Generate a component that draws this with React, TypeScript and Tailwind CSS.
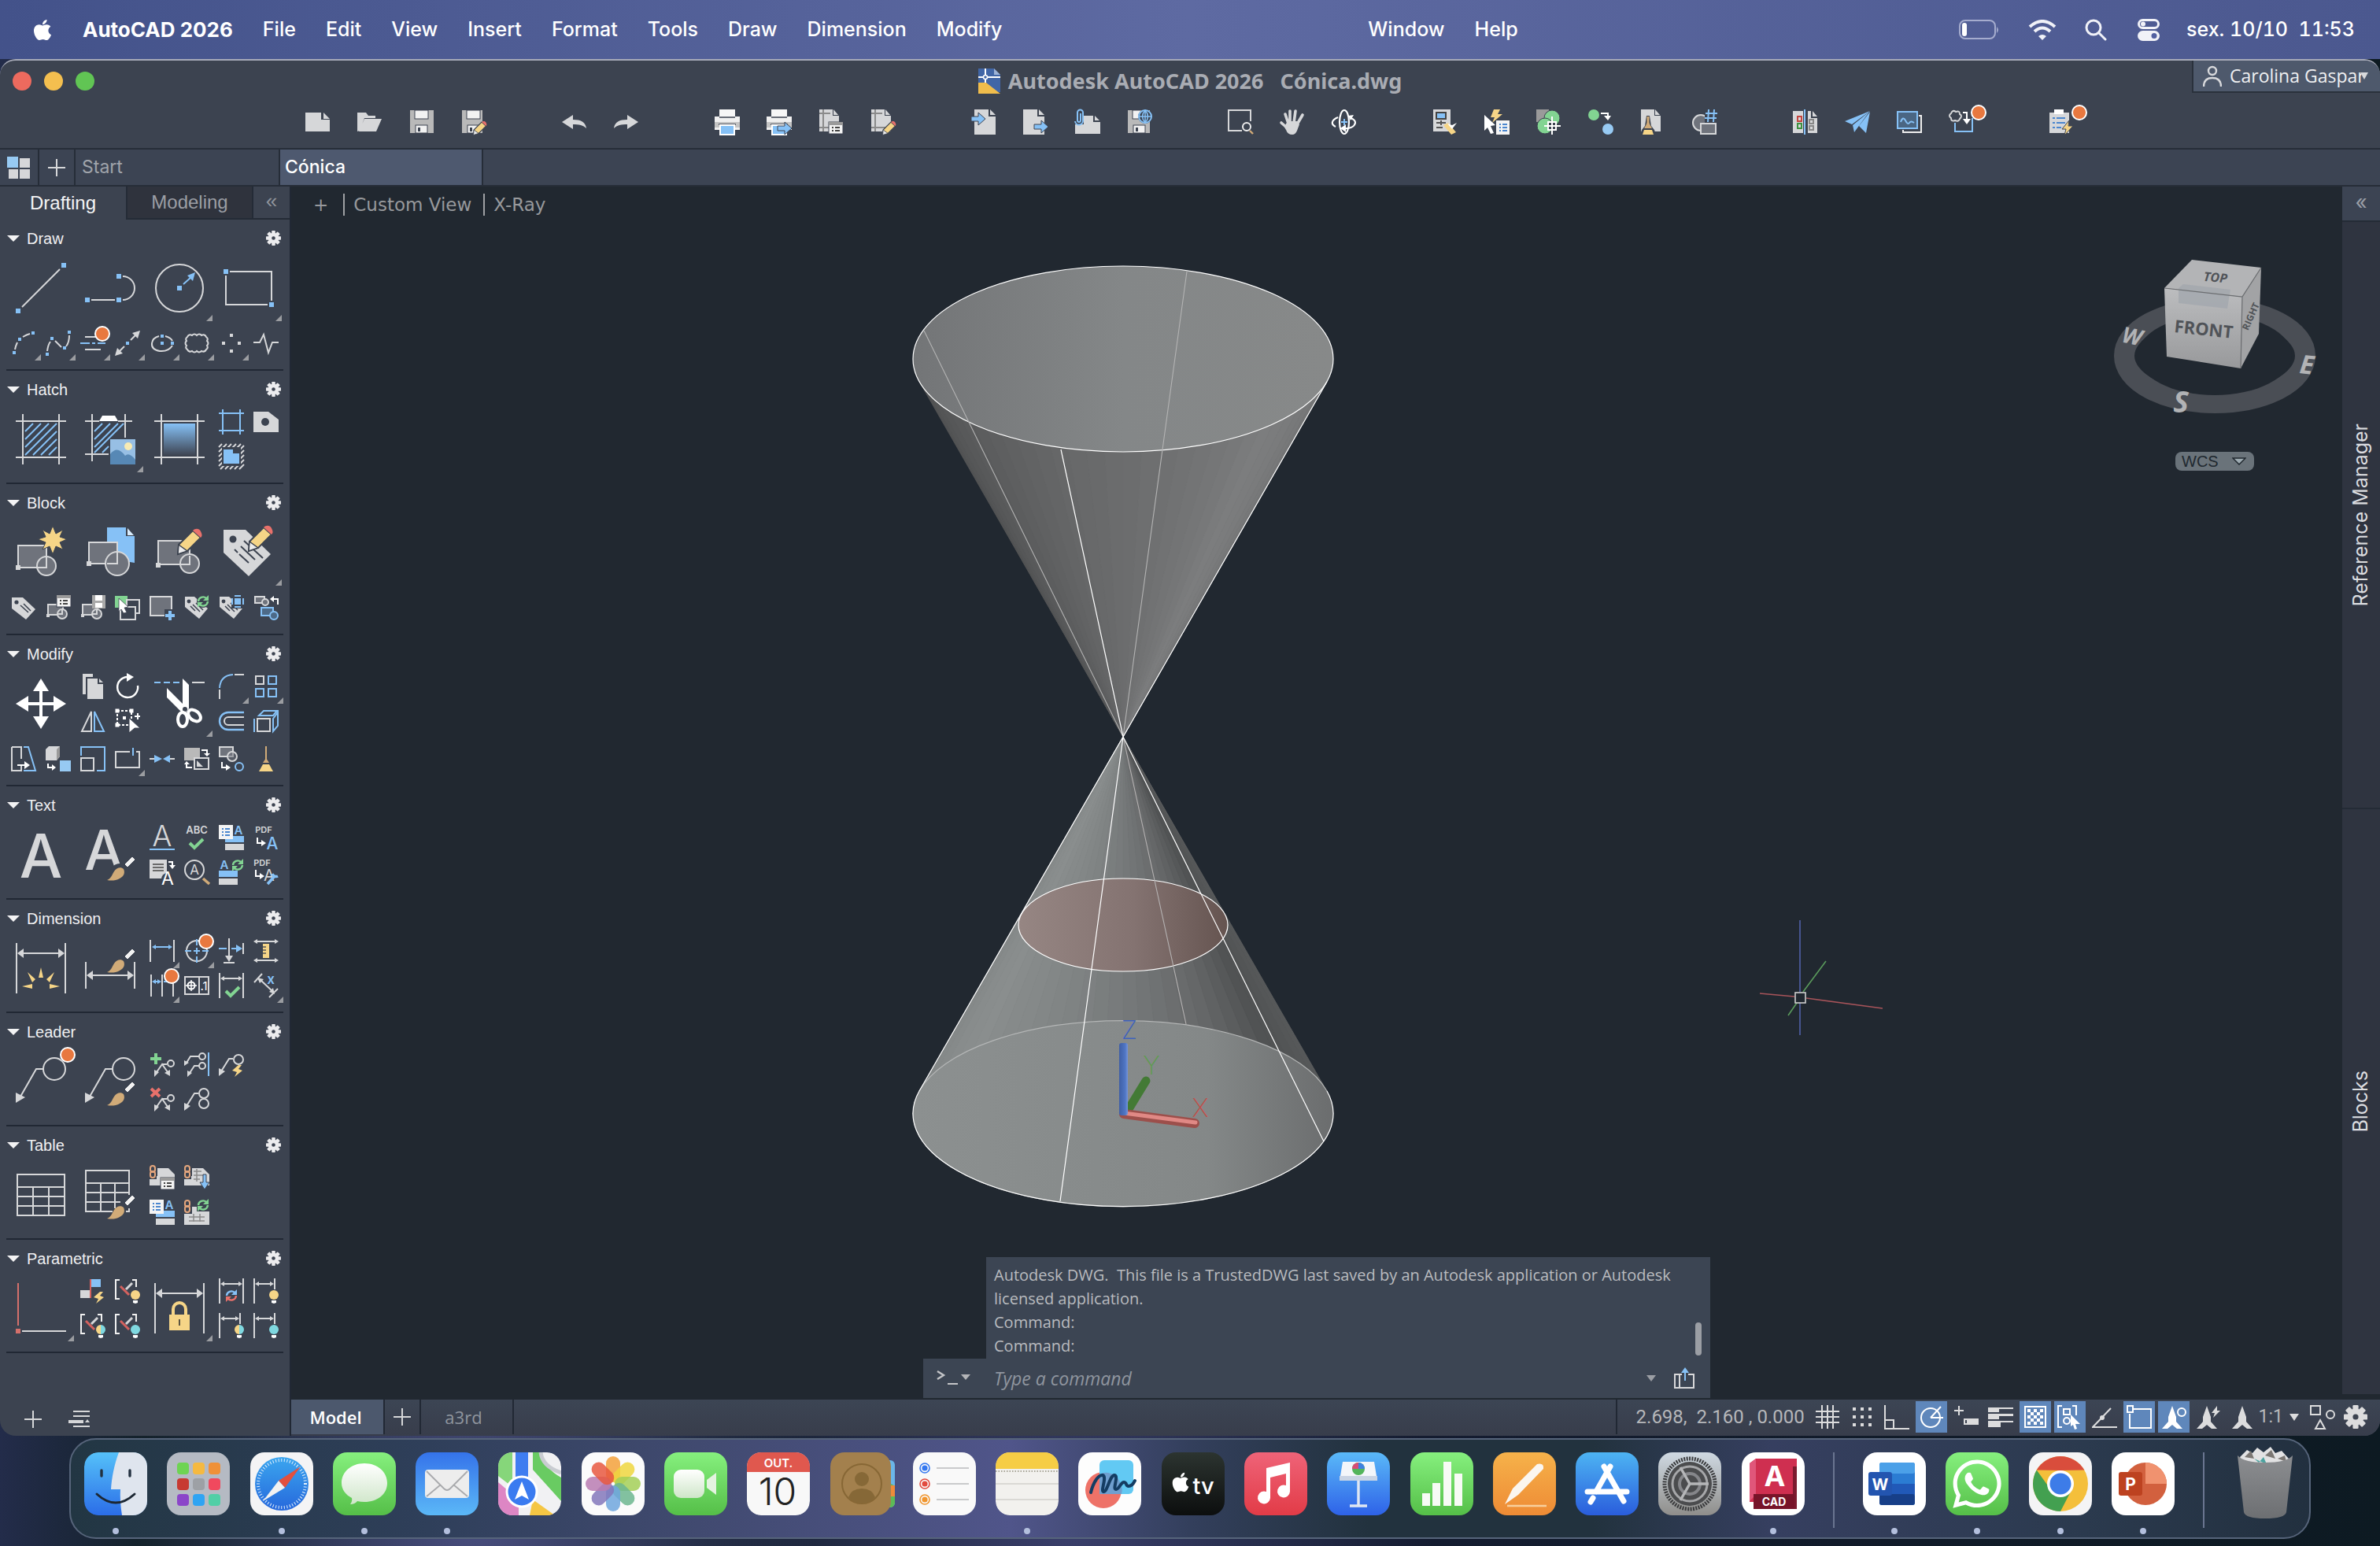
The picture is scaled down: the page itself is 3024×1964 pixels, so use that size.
import React from 'react';
import { FaApple, FaWhatsapp } from 'react-icons/fa';

// icon palette
const G = '#d6d7d9';
const B = '#86c1f6';
const Y = '#f6d587';
const GR = '#82d492';
const R = '#e8716b';
const BG = '#3c4350';
const TAN = '#d1ab78';

type Tool = { name: string; art: React.ReactNode; big?: boolean; fly?: boolean; badge?: boolean };
type Section = { title: string; tools: (Tool | null)[]; extra?: (Tool | null)[] };

const Sq = ({ x, y, s = 6, f = B }: { x: number; y: number; s?: number; f?: string }) => (
  <rect x={x - s / 2} y={y - s / 2} width={s} height={s} fill={f} />
);

const L = ({ d, c = G, w = 2, f = 'none', dash }: { d: string; c?: string; w?: number; f?: string; dash?: string }) => (
  <path d={d} stroke={c} strokeWidth={w} fill={f} strokeDasharray={dash} />
);

const P = ({ d, c = G, o }: { d: string; c?: string; o?: string }) => (
  <path d={d} fill={c} stroke={o} strokeWidth={o ? 2 : undefined} />
);

const T = ({ x, y, s, c = G, w = 400, children }: { x: number; y: number; s: number; c?: string; w?: number; children: string }) => (
  <text x={x} y={y} fontSize={s} fill={c} fontWeight={w} textAnchor="middle" fontFamily='Inter, "Liberation Sans", sans-serif'>
    {children}
  </text>
);

const Gear = ({ size = 19, color = '#ececee', hole = BG }: { size?: number; color?: string; hole?: string }) => (
  <svg width={size} height={size} viewBox="-10 -10 20 20" aria-hidden="true">
    {[0, 45, 90, 135].map((a) => (
      <rect key={a} x="-2.4" y="-10" width="4.8" height="20" rx="0.8" fill={color} transform={`rotate(${a})`} />
    ))}
    <circle r="7" fill={color} />
    <circle r="2.4" fill={hole} />
  </svg>
);

const Brush = ({ x = 0, y = 0 }: { x?: number; y?: number }) => (
  <g transform={`translate(${x} ${y})`}>
    <path d="M22 10L32 0l4 4L26 14z" fill="#f2f2f2" stroke={BG} strokeWidth="1" />
    <path d="M0 30c5-2 6-6 9-11 3-5 9-6 12-3 2 4 1 9-5 12-5 3-11 3-16 2z" fill={TAN} />
  </g>
);

const Check = ({ x, y }: { x: number; y: number }) => <L d={`M${x} ${y}l6 6 11-11`} c={GR} w={4} />;

const Bulb = ({ x, y, left = Y, right = Y }: { x: number; y: number; left?: string; right?: string }) => (
  <g>
    <path d={`M${x} ${y - 6}a6 6 0 0 0 0 12z`} fill={left} />
    <path d={`M${x} ${y - 6}a6 6 0 0 1 0 12z`} fill={right} />
    <path d={`M${x - 3} ${y + 7}h6v3l-3 1-3-1z`} fill="#fff" />
  </g>
);

const Sync = ({ x, y, a = GR, b = GR }: { x: number; y: number; a?: string; b?: string }) => (
  <g>
    <L d={`M${x - 6} ${y}a6 6 0 0 1 10-4`} c={a} w={2.4} />
    <L d={`M${x + 6} ${y}a6 6 0 0 1-10 4`} c={b} w={2.4} />
    <P d={`M${x + 7} ${y - 8}v7h-7z`} c={a} />
    <P d={`M${x - 7} ${y + 8}v-7h7z`} c={b} />
  </g>
);

const Bolt = ({ x, y }: { x: number; y: number }) => <P d={`M${x + 8} ${y}L${x} ${y + 7}l6 2-3 6 10-8-5-2 4-5z`} c={Y} />;

const DimH = ({ x1, x2, y, c = G, s = 4 }: { x1: number; x2: number; y: number; c?: string; s?: number }) => (
  <g>
    <L d={`M${x1 + s} ${y}H${x2 - s}`} c={c} />
    <P d={`M${x1} ${y}l${s + 2} ${-s}v${s * 2}z`} c={c} />
    <P d={`M${x2} ${y}l${-s - 2} ${-s}v${s * 2}z`} c={c} />
  </g>
);

const MiniBlock = () => (
  <g>
    <rect x="3" y="12" width="19" height="13" fill="#6f737c" stroke={G} strokeWidth="2" />
    <circle cx="21" cy="24" r="6" fill="#6f737c" stroke={G} strokeWidth="2" />
    <L d="M16 24h5v-6" w={2} />
    <Sq x={3} y={26} s={4} f={G} />
  </g>
);

const MiniTag = () => (
  <g>
    <P d="M1 2h12l17 15-11 13L1 15z" />
    <circle cx="6" cy="8" r="2.4" fill={BG} />
    <L d="M11 12l9 9M15 10l9 9M8 14l6 6" c={BG} w={1.5} />
  </g>
);

const ListCard = ({ x, y, w = 18, h = 18 }: { x: number; y: number; w?: number; h?: number }) => (
  <g>
    <rect x={x} y={y} width={w} height={h} fill="#f4f4f4" />
    {[5, 9, 13].map((d) => (
      <L key={d} d={`M${x + 4} ${y + d}h2M${x + 8} ${y + d}h6`} c="#4b87cf" w={2} />
    ))}
  </g>
);

const Form = ({ x, y }: { x: number; y: number }) => (
  <g>
    <rect x={x} y={y} width="18" height="15" fill="#f4f4f4" stroke={BG} strokeWidth="1" />
    <rect x={x} y={y} width="18" height="4" fill="#9a9a9a" />
    <L d={`M${x + 4} ${y + 7}h2M${x + 8} ${y + 7}h6M${x + 4} ${y + 11}h2M${x + 8} ${y + 11}h6`} c="#444" w={2} />
  </g>
);

const Chain = () => (
  <g fill="none">
    <rect x="0" y="0" width="9" height="18" fill={BG} />
    <rect x="1" y="1" width="6" height="8" rx="3" stroke="#e4a67d" strokeWidth="2" />
    <rect x="1" y="8" width="6" height="8" rx="3" stroke="#e4a67d" strokeWidth="2" />
  </g>
);

const Constraint = () => (
  <g>
    <L d="M6 2H1v24h5M22 2h5v9" c="#f0f0f0" />
    <L d="M7 10l11 11" c="#d4615e" w={3} />
    <L d="M14 14l8-8" w={3} />
  </g>
);

const Pencil = ({ x, y, k = 1 }: { x: number; y: number; k?: number }) => (
  <g transform={`translate(${x} ${y}) scale(${k})`}>
    <path d="M2 20L20 2l10 9-17 17-12 4z" fill={Y} stroke={BG} strokeWidth="2" />
    <path d="M20 2c3-3 8-3 10 1s2 6 0 8z" fill={R} />
    <path d="M2 20l11 8-12 4z" fill="#ececec" stroke={BG} strokeWidth="1.5" />
  </g>
);

const leaderArt = (
  <g>
    <circle cx="49" cy="16" r="14" fill="none" stroke={G} strokeWidth="2" />
    <L d="M35 16h-9L6 51" />
    <P d="M0 46l12 6-12 7z" />
  </g>
);

const miniLeader = (
  <g>
    <L d="M9 26l7-10 7 10M16 16h6" />
    <circle cx="27" cy="15" r="4" fill="none" stroke={G} strokeWidth="2" />
    <P d="M6 23l6 3-6 6zM26 23v8l-7-4z" />
  </g>
);

const textList = (
  <g>
    <rect x="8" y="14" width="24" height="8" fill={B} />
    <rect x="8" y="24" width="24" height="8" fill={G} />
    <ListCard x={0} y={0} />
    <T x={25} y={12} s={15} c={B} w={600}>A</T>
  </g>
);

const sections: Section[] = [
  {
    title: 'Draw',
    tools: [
      { name: 'Line', big: true, art: <g><L d="M8 56L56 8" /><Sq x={3} y={61} /><Sq x={61} y={3} /></g> },
      { name: 'Polyline', big: true, art: <g><L d="M8 47h30M48 17a15 15 0 0 1 0 30" /><Sq x={3} y={47} /><Sq x={43} y={47} /><Sq x={43} y={17} /></g> },
      { name: 'Circle', big: true, fly: true, art: <g><circle cx="32" cy="32" r="30" fill="none" stroke={G} strokeWidth="2" /><Sq x={32} y={32} /><L d="M37 27l10-9" c={B} /><P d="M52 12l-3 11-7-7z" c={B} /></g> },
      { name: 'Rectangle', big: true, fly: true, art: <g><L d="M8 11h53v37M3 16v37h53" /><Sq x={3} y={11} /><Sq x={61} y={53} /></g> },
    ],
    extra: [
      { name: 'Arc', fly: true, art: <g><L d="M5 24q1-5 3-9M15 8q5-3 9-4" /><Sq x={4} y={28} s={4} /><Sq x={11} y={11} s={4} /><Sq x={28} y={3} s={4} /></g> },
      { name: 'Spline', fly: true, art: <g><L d="M2 26q1-8 4-12M12 13l8 8M26 20q4-5 4-14" /><Sq x={2} y={30} s={4} /><Sq x={8} y={10} s={4} /><Sq x={24} y={22} s={4} /><Sq x={30} y={2} s={4} /></g> },
      { name: 'Multiline', fly: true, badge: true, art: <g><L d="M6 8h18M6 24h20" /><L d="M0 16h12M15 16h4M22 16h10" c={B} /></g> },
      { name: 'Ray', fly: true, art: <g><L d="M6 26l6-6M20 12l6-6" /><Sq x={16} y={16} s={4} /><P d="M32 0l-3 10-7-7zM0 32l3-10 7 7z" /></g> },
      { name: 'Ellipse', fly: true, art: <g><L d="M20 7q7 2 9 6M29 19q-5 8-16 7Q2 24 3 16q1-7 9-9" /><Sq x={16} y={7} s={4} /><Sq x={16} y={16} s={4} /><Sq x={29} y={16} s={4} /></g> },
      { name: 'Revision cloud', fly: true, art: <g><path d="M4 8q2-4 6-2 3-3 6 0 3-3 6 0 4-2 6 2 3 2 1 5 3 3 0 6 2 3-1 5-2 4-6 2-3 3-6 0-3 3-6 0-4 2-6-2-3-2-1-5-3-3 0-6-2-3 1-5z" fill="none" stroke={G} strokeWidth="2" /></g> },
      { name: 'Point', fly: true, art: <g><Sq x={16} y={6} s={4} f={G} /><Sq x={16} y={26} s={4} f={G} /><Sq x={6} y={16} s={4} f={G} /><Sq x={26} y={16} s={4} f={G} /></g> },
      { name: 'Break line', art: <L d="M0 15h8l5-10 6 23 5-13h8" /> },
    ],
  },
  {
    title: 'Hatch',
    tools: [
      { name: 'Hatch', big: true, art: <g><L d="M9 0v64M55 0v64M0 9h64M0 55h64" /><L d="M12 22L22 12M12 32L32 12M12 42L42 12M12 52L52 12M22 52L52 22M32 52L52 32M42 52L52 42" c={B} /></g> },
      { name: 'Super hatch', big: true, fly: true, art: <g><L d="M9 0v60M0 9h18M42 9h18M51 0v30M0 51h30" /><L d="M12 22L22 12M12 32L32 12M12 42L42 12M12 49L49 12M22 49l8-8" c={B} /><P d="M18 9l4-7h16l4 7z" c="#fff" /><rect x="32" y="32" width="32" height="32" fill="#97bfe4" /><circle cx="55" cy="41" r="5" fill="#f7ebb4" /><P d="M32 51q9-12 19 2 5-5 13 5v6H32z" c="#5788b5" /></g> },
      { name: 'Gradient', big: true, art: <g><defs><linearGradient id="grad" x1="0" y1="0" x2="0" y2="1"><stop offset="0" stopColor="#86c1f6" /><stop offset="1" stopColor="#3f4654" /></linearGradient></defs><L d="M9 0v64M55 0v64M0 9h64M0 55h64" /><rect x="12" y="12" width="40" height="40" fill="url(#grad)" /></g> },
      { name: 'Boundary', art: <L d="M5 0v32M27 0v32M0 5h32M0 27h32" c={B} /> },
      { name: 'Wipeout', art: <g><P d="M0 3h19l13 10v16H0z" /><circle cx="15" cy="16" r="5" fill={BG} /></g> },
      { name: 'Hatch boundary', art: <g><L d="M0 4l4-4M0 10L10 0M0 16L16 0M0 22L22 0M0 28L28 0M2 32L32 2M8 32L32 8M14 32l18-18M20 32l12-12M26 32l6-6" /><rect x="4" y="4" width="24" height="24" fill={BG} /><P d="M6 7h12v5h8v13H6z" c={B} /></g> },
    ],
  },
  {
    title: 'Block',
    tools: [
      { name: 'Create block', big: true, art: <g><rect x="3" y="23" width="36" height="28" fill="#6f737c" stroke={G} strokeWidth="2" /><circle cx="39" cy="49" r="12" fill="#6f737c" stroke={G} strokeWidth="2" /><L d="M27 51h12V38" /><Sq x={3} y={51} f={G} /><path d="M47-2l4 10 9-5-4 9 9 3-9 4 4 9-9-4-4 10-4-10-9 4 4-9-10-4 10-3-4-9 9 5z" fill={Y} stroke={BG} strokeWidth="1" /></g> },
      { name: 'Insert block', big: true, art: <g><path d="M28 0h24v11h11v34l-35-6z" fill={B} /><path d="M54 1v9h8z" fill="#d9ecfc" /><rect x="5" y="19" width="36" height="27" fill="#6f737c" stroke={G} strokeWidth="2" /><circle cx="41" cy="46" r="15" fill="#6f737c" stroke={G} strokeWidth="2" /><L d="M28 46h13V32" /><Sq x={5} y={46} f={G} /></g> },
      { name: 'Edit block', big: true, art: <g><rect x="5" y="17" width="40" height="30" fill="#6f737c" stroke={G} strokeWidth="2" /><circle cx="45" cy="46" r="12" fill="#6f737c" stroke={G} strokeWidth="2" /><L d="M34 47h11V36" /><Sq x={5} y={48} f={G} /><Pencil x={29} y={2} /></g> },
      { name: 'Edit attribute', big: true, fly: true, art: <g><P d="M0 3h28l32 31-28 28L0 32z" /><circle cx="12" cy="15" r="4.5" fill={BG} /><L d="M26 17l24 22M22 24l18 17M20 34l12 11M14 28l4 4" c={BG} /><Pencil x={31} y={-2} /></g> },
    ],
    extra: [
      { name: 'Define attribute', art: <g><P d="M1 3h14l16 15-12 13L1 17z" /><circle cx="7" cy="9" r="2.6" fill={BG} /><L d="M12 13l10 9M16 11l9 9" c={BG} w={1.6} /></g> },
      { name: 'Block properties', art: <g><MiniBlock /><Form x={14} y={0} /></g> },
      { name: 'Write block', art: <g><MiniBlock /><rect x="15" y="0" width="17" height="17" fill="#a9a9a9" /><rect x="19" y="0" width="9" height="7" fill="#fff" /><rect x="19" y="10" width="9" height="6" fill="#fff" /></g> },
      { name: 'Select block', art: <g><rect x="0" y="1" width="16" height="15" fill={GR} /><rect x="15" y="6" width="16" height="17" fill="none" stroke={G} strokeWidth="2" /><rect x="7" y="15" width="19" height="16" fill={BG} stroke={G} strokeWidth="2" /><path d="M5 4l12 11-5 1 3 6-4 1-3-5-3 3z" fill="#fff" stroke={BG} strokeWidth="0.8" /></g> },
      { name: 'Base point', art: <g><rect x="1" y="2" width="27" height="24" fill="#6f737c" stroke={G} strokeWidth="2" /><rect x="19" y="18" width="13" height="14" fill={BG} /><L d="M26 20v12M20 26h12" c={B} w={4} /></g> },
      { name: 'Sync attributes', art: <g><MiniTag /><circle cx="24" cy="8" r="8" fill={BG} /><Sync x={24} y={8} /></g> },
      { name: 'Attribute display', art: <g><MiniTag /><rect x="16" y="0" width="16" height="17" fill={BG} /><rect x="20" y="4" width="8" height="8" fill={B} /><L d="M20 1h8M20 15h8M17 4v8M31 4v8" c={B} /></g> },
      { name: 'Replace block', art: <g><rect x="2" y="2" width="12" height="8" fill="#6f737c" stroke={G} strokeWidth="2" /><circle cx="15" cy="9" r="4" fill="#6f737c" stroke={G} strokeWidth="2" /><L d="M31 12V5h-6" c="#fff" /><P d="M26 1v8l-5-4z" c="#fff" /><rect x="10" y="16" width="15" height="10" fill="#4d6a88" stroke={B} strokeWidth="2" /><circle cx="26" cy="26" r="5" fill="#4d6a88" stroke={B} strokeWidth="2" /></g> },
    ],
  },
  {
    title: 'Modify',
    tools: [
      { name: 'Move', big: true, art: <g><L d="M32 8v48M8 32h48" c="#fff" w={4} /><P d="M32 0l10 16H22zM32 64l10-16H22zM0 32l16-10v20zM64 32L48 22v20z" c="#fff" /></g> },
      { name: 'Copy', art: <g><P d="M3 0h13v4H7v22H3z" /><P d="M9 6h13v7h7v19H9zM24 6l5 5h-5z" /></g> },
      { name: 'Rotate', art: <g><L d="M29 15a13 13 0 1 1-13-11" c="#fff" w={2.4} /><P d="M15-1l9 5-9 6z" c="#fff" /></g> },
      { name: 'Trim', big: true, fly: true, art: <g><L d="M0 5h34" c={B} dash="8 4" /><L d="M48 5h16" /><P d="M36 0l8 8v30l-6 8-22-22V12l20 20z" c="#fff" /><circle cx="39" cy="39" r="3" fill={BG} /><ellipse cx="36" cy="52" rx="6" ry="9" fill="none" stroke="#fff" strokeWidth="4" /><ellipse cx="51" cy="47" rx="6" ry="9" fill="none" stroke="#fff" strokeWidth="4" transform="rotate(-50 51 47)" /></g> },
      { name: 'Fillet', fly: true, art: <g><L d="M1 18Q2 2 18 1" c={B} /><L d="M20 1h12M1 20v12" /></g> },
      { name: 'Array', fly: true, art: <g fill="none" strokeWidth="2"><rect x="3" y="3" width="10" height="10" stroke={G} /><rect x="19" y="3" width="10" height="10" stroke={B} /><rect x="3" y="19" width="10" height="10" stroke={B} /><rect x="19" y="19" width="10" height="10" stroke={B} /></g> },
      { name: 'Mirror', art: <g><L d="M14 4v25H2z" /><L d="M18 4v25h12z" c={B} /></g> },
      { name: 'Stretch grips', art: <g><rect x="3" y="3" width="18" height="18" fill="none" stroke="#fff" strokeWidth="2" strokeDasharray="3 2" /><Sq x={3} y={3} s={5} f="#fff" /><Sq x={21} y={3} s={5} f="#fff" /><Sq x={3} y={21} s={5} f="#fff" /><Sq x={12} y={12} s={4} f="#fff" /><path d="M18 12l14 13h-7l-7 6z" fill="#fff" stroke={BG} strokeWidth="1" /><L d="M29 6v8M25 10h7" c="#fff" /></g> },
      { name: 'Offset', art: <g><L d="M32 5H12a11 11 0 0 0 0 22h20" c={B} w={2.4} /><L d="M32 11H12a5 5 0 0 0 0 10h20" /></g> },
      { name: 'Solid offset', art: <g><rect x="5" y="13" width="16" height="16" fill="none" stroke={G} strokeWidth="2" /><L d="M1 13v17M7 9l6-6h17l-5 6zM25 29V13l6-8v17z" c={B} /></g> },
    ],
    extra: [
      { name: 'Shear', art: <g><L d="M1 1h12v15M13 24v7H1V1" /><L d="M16 1h6l9 30H16" c={B} /><L d="M8 24h11" c="#fff" /><P d="M17 19l7 5-7 5z" c="#fff" /></g> },
      { name: 'Move to layer', art: <g><P d="M0 4l4-4h14v13l-4 5H0z" /><P d="M14 4l4-4v13l-4 5z" c="#9a9a9a" /><rect x="18" y="18" width="14" height="14" fill="#97caf3" /><L d="M3 22v5h6" c="#fff" /><P d="M8 23l5 4-5 4z" c="#fff" /></g> },
      { name: 'Scale', art: <g><L d="M1 12V1h30v30H21" c={B} /><rect x="1" y="15" width="16" height="16" fill="none" stroke={G} strokeWidth="2" /></g> },
      { name: 'Break', fly: true, art: <g><L d="M19 7H1v20h30V7h-4" /><L d="M23 2v10" c={B} /></g> },
      { name: 'Join', art: <g><L d="M0 16h6M26 16h6" /><P d="M6 11l10 5-10 5zM26 11l-9 5 9 5z" c={B} /></g> },
      { name: 'Draw order', art: <g><rect x="0" y="2" width="20" height="16" fill="#b9b9b9" /><rect x="13" y="15" width="18" height="14" fill={BG} stroke={G} strokeWidth="2" /><P d="M16 18v8h8z" /><L d="M22 5h7v5M10 27H3v-5" c="#fff" /><P d="M25 9h8l-4 4zM0 23h7l-4-4z" c="#fff" /></g> },
      { name: 'Copy nested', art: <g><rect x="1" y="1" width="17" height="12" fill="#6f737c" stroke={G} strokeWidth="2" /><circle cx="17" cy="13" r="6" fill="#6f737c88" stroke={G} strokeWidth="2" /><circle cx="26" cy="26" r="5" fill="none" stroke={B} strokeWidth="2" /><L d="M4 20v7h6" c="#fff" /><P d="M9 23l6 4-6 4z" c="#fff" /></g> },
      { name: 'Purge', art: <g><L d="M16 0v18" c={TAN} /><P d="M16 15l4 6h-8z" c={TAN} /><P d="M12 23h8l5 9H7z" c={Y} /></g> },
    ],
  },
  {
    title: 'Text',
    tools: [
      { name: 'Multiline text', big: true, art: <T x={32} y={61} s={77} w={500}>A</T> },
      { name: 'Text style', big: true, art: <g><T x={24} y={51} s={70} w={500}>A</T><circle cx="44" cy="55" r="12" fill={BG} /><Brush x={28} y={34} /></g> },
      { name: 'Single line text', art: <g><T x={16} y={27} s={37} w={300}>A</T><L d="M0 31h32" c={B} /></g> },
      { name: 'Spell check', art: <g><T x={16} y={11} s={13} w={600}>ABC</T><Check x={7} y={23} /></g> },
      { name: 'Text list', art: textList },
      { name: 'PDF text', art: <g><T x={13} y={10} s={11} w={600}>PDF</T><L d="M5 16v7h6" c="#fff" /><P d="M10 19l6 4-6 4z" c="#fff" /><T x={24} y={31} s={21} c={B} w={500}>A</T></g> },
      { name: 'Convert text', art: <g><rect x="0" y="0" width="22" height="24" fill={G} /><L d="M4 6h14M4 10h14M4 14h14" c="#6a6a6a" /><L d="M24 3h5v5" c="#fff" /><P d="M25 7h8l-4 5z" c="#fff" /><circle cx="23" cy="25" r="8" fill={BG} /><T x={23} y={32} s={23} c="#fff">A</T></g> },
      { name: 'Find text', art: <g><circle cx="13" cy="13" r="12" fill="none" stroke={G} strokeWidth="2" /><L d="M24 24l8 7" c={TAN} w={3.5} /><T x={13} y={19} s={17}>A</T></g> },
      { name: 'Update text', art: <g><rect x="0" y="14" width="24" height="8" fill={B} /><rect x="0" y="24" width="24" height="8" fill={G} /><T x={7} y={12} s={15} c={B} w={600}>A</T><Sync x={24} y={7} /></g> },
      { name: 'PDF settings', art: <g><T x={11} y={8} s={11} w={600}>PDF</T><L d="M3 13v8h6" c="#fff" /><P d="M8 17l6 4-6 4z" c="#fff" /><T x={20} y={27} s={20}>A</T><L d="M18 31l8-9M24 18a5 5 0 0 0 7 3" c={B} w={3.5} /></g> },
    ],
  },
  {
    title: 'Dimension',
    tools: [
      { name: 'Dimension', big: true, art: <g><L d="M1 0v64M63 0v64" /><DimH x1={2} x2={62} y={13} s={6} /><P d="M32 31l-3 13h6zM15 37l10 9-4 4zM49 37l-10 9 4 4zM8 55l13-3v6zM56 55l-13-3v6z" c={Y} /></g> },
      { name: 'Dimension style', big: true, art: <g><L d="M1 24v34M63 24v34" /><DimH x1={2} x2={62} y={41} s={6} /><Brush x={28} y={7} /></g> },
      { name: 'Linear', fly: true, art: <g><L d="M1 2v28M31 2v28" /><DimH x1={3} x2={29} y={11} c={B} s={3} /></g> },
      { name: 'Center mark', fly: true, badge: true, art: <g><circle cx="16" cy="16" r="13" fill="none" stroke={G} strokeWidth="2" /><L d="M16 1v30M1 16h30" c={B} dash="8 3" /></g> },
      { name: 'Ordinate', art: <g><L d="M0 13h10M16 13h8" c={B} /><P d="M22 8l8 5-8 5z" c={B} /><L d="M13 0v24M31 6v14M6 31h14" /><P d="M8 22h10l-5 8z" /></g> },
      { name: 'Quick dimension', art: <g><DimH x1={0} x2={32} y={4} s={3} /><DimH x1={0} x2={32} y={28} s={3} /><rect x="12" y="7" width="8" height="18" fill={Y} /><L d="M12 11h4M12 15h4M12 19h4" c="#555" w={1.5} /></g> },
      { name: 'Continue', fly: true, badge: true, art: <g><L d="M2 2v28M16 2v28M30 12v18" /><DimH x1={3} x2={15} y={11} c={B} s={3} /><L d="M18 11h8" c={B} /></g> },
      { name: 'Tolerance', art: <g><rect x="1" y="5" width="30" height="22" fill="none" stroke={G} strokeWidth="2" /><L d="M19 5v22" /><circle cx="9" cy="16" r="4.5" fill="none" stroke="#fff" strokeWidth="2" /><L d="M9 9v14M2 16h14" c="#fff" w={1.5} /><T x={25} y={22} s={15} c="#fff">.1</T></g> },
      { name: 'Inspect', art: <g><L d="M1 0v32M31 0v32" /><DimH x1={2} x2={30} y={7} s={3} /><Check x={9} y={23} /></g> },
      { name: 'Oblique', fly: true, art: <g><L d="M1 12L11 1M20 31l11-11M8 8l17 16" /><P d="M5 6l8 2-5 5zM27 27l-2-8-5 5z" /><T x={22} y={14} s={17} c={B} w={600}>x</T></g> },
    ],
  },
  {
    title: 'Leader',
    tools: [
      { name: 'Multileader', big: true, badge: true, art: leaderArt },
      { name: 'Multileader style', big: true, art: <g>{leaderArt}<Brush x={28} y={32} /></g> },
      { name: 'Add leader', art: <g>{miniLeader}<L d="M8 2v14M1 9h14" c={GR} w={4} /></g> },
      { name: 'Align leader', art: <g><L d="M31 1v30" c={B} /><L d="M3 14l5-8h11M7 27l6-9h6" /><circle cx="23" cy="6" r="4" fill="none" stroke={G} strokeWidth="2" /><circle cx="23" cy="18" r="4" fill="none" stroke={G} strokeWidth="2" /><P d="M0 11l6 3-6 4zM4 24l6 3-6 5z" /></g> },
      { name: 'Leader content', art: <g><circle cx="25" cy="10" r="6" fill="none" stroke={G} strokeWidth="2" /><L d="M18 9h-5L3 25" /><P d="M0 21l8 4-8 6z" /><Bolt x={17} y={17} /></g> },
      null,
      { name: 'Remove leader', art: <g>{miniLeader}<L d="M2 3l11 10M13 3L2 13" c={R} w={4} /></g> },
      { name: 'Collect leader', art: <g><circle cx="25" cy="9" r="6" fill="none" stroke={G} strokeWidth="2" /><circle cx="25" cy="22" r="6" fill="none" stroke={G} strokeWidth="2" /><L d="M18 9h-5L3 25" /><P d="M0 21l8 4-8 6z" /></g> },
    ],
  },
  {
    title: 'Table',
    tools: [
      { name: 'Table', big: true, art: <L d="M2 6h60v52H2zM2 22h60M2 34h60M2 46h60M22 22v36M42 22v36" /> },
      { name: 'Table style', big: true, art: <g><L d="M56 32V1H1v52h34M1 17h55M1 29h55M1 41h44M20 17v36M38 17v32M56 49v4h-4" /><Brush x={28} y={32} /></g> },
      { name: 'Data link', art: <g><P d="M0 14h10V4h14l8 8v14H0z" /><Chain /><Form x={14} y={16} /></g> },
      { name: 'Download link', art: <g><P d="M0 14h10V4h14l8 8v14H0z" /><L d="M12 8h10M12 13h12M12 18h8M16 5v16" c="#8a8a8a" w={1.5} /><Chain /><path d="M24 12h4v10h4l-6 9-6-9h4z" fill={B} stroke={BG} /></g> },
      null,
      null,
      { name: 'Table text', art: textList },
      { name: 'Update links', art: <g><P d="M0 18h10V9h6v6h16v17H0z" /><L d="M6 22h20M6 27h20M12 18v10M20 18v10" c="#8a8a8a" w={1.5} /><Chain /><Sync x={24} y={7} /></g> },
    ],
  },
  {
    title: 'Parametric',
    tools: [
      { name: 'Coincident', big: true, fly: true, art: <g><L d="M3 0v54" c="#d4706b" /><L d="M8 61h56" /><Sq x={3} y={61} f="#d4706b" /></g> },
      { name: 'Auto constrain', art: <g><rect x="0" y="15" width="12" height="10" fill={G} /><rect x="14" y="1" width="12" height="10" fill={B} /><L d="M13 1v24" c="#d4615e" /><Bolt x={17} y={17} /></g> },
      { name: 'Show constraints', art: <g><Constraint /><Bulb x={26} y={21} /></g> },
      { name: 'Dimensional constraint', big: true, fly: true, art: <g><L d="M1 0v64M63 0v64" /><DimH x1={2} x2={62} y={13} s={6} /><path d="M24 42v-9a8 8 0 0 1 16 0v9" fill="none" stroke={Y} strokeWidth="4" /><rect x="19" y="40" width="26" height="20" fill={Y} /><L d="M32 46v8" c="#5a5340" /></g> },
      { name: 'Convert constraint', art: <g><L d="M1 0v32M31 0v32" /><DimH x1={2} x2={30} y={7} s={3} /><Sync x={16} y={22} a={B} b={R} /></g> },
      { name: 'Show dynamic', art: <g><L d="M1 0v32M27 0v14" /><DimH x1={2} x2={26} y={7} s={3} /><Bulb x={26} y={21} /></g> },
      { name: 'Show all', art: <g><Constraint /><Bulb x={26} y={21} right="#7fd8e0" /></g> },
      { name: 'Hide constraints', art: <g><Constraint /><Bulb x={26} y={21} left="#7fd8e0" right="#7fd8e0" /></g> },
      { name: 'Show some dynamic', art: <g><L d="M1 0v32M27 0v14" /><DimH x1={2} x2={26} y={7} s={3} /><Bulb x={26} y={21} right="#7fd8e0" /></g> },
      { name: 'Hide dynamic', art: <g><L d="M1 0v32M27 0v14" /><DimH x1={2} x2={26} y={7} s={3} /><Bulb x={26} y={21} left="#7fd8e0" right="#7fd8e0" /></g> },
    ],
  },
];

const Badge = ({ className }: { className: string }) => (
  <span className={`absolute size-5 rounded-full border-2 border-white bg-[#e8783f] ${className}`} />
);

const ToolButton = ({ tool }: { tool: Tool | null }) => {
  if (!tool) return <span />;
  return (
    <button type="button" aria-label={tool.name} className={`relative flex items-center justify-center ${tool.big ? 'col-span-2 row-span-2 h-[88px]' : 'h-11'}`}>
      {tool.big ? (
        <svg className="size-16 overflow-visible" viewBox="0 0 64 64">{tool.art}</svg>
      ) : (
        <svg className="size-8 overflow-visible" viewBox="0 0 32 32">{tool.art}</svg>
      )}
      {tool.fly && (
        <svg className={`absolute size-2 ${tool.big ? 'bottom-0.5 right-0.5' : 'bottom-0 right-0'}`} viewBox="0 0 8 8">
          <path d="M8 0v8H0z" fill="#9b9da1" />
        </svg>
      )}
      {tool.badge && <Badge className="right-0 top-0" />}
    </button>
  );
};

const PaletteSection = ({ section }: { section: Section }) => (
  <section className="mx-2 border-b-2 border-[#212834]">
    <header className="flex h-[43px] items-center pt-1">
      <svg className="ml-px w-4" viewBox="0 0 16 8"><path d="M0 0h16L8 8z" fill="#f3f3f4" /></svg>
      <h2 className="ml-[9px] text-xl leading-6 text-[#f0f0f2]">{section.title}</h2>
      <button type="button" aria-label={`${section.title} settings`} className="ml-auto mr-[3px]"><Gear /></button>
    </header>
    <div className="grid grid-cols-8">
      {section.tools.map((t, i) => <ToolButton key={i} tool={t} />)}
    </div>
    {section.extra ? (
      <div className="grid grid-cols-8 pb-[11px] pt-1">
        {section.extra.map((t, i) => <ToolButton key={i} tool={t} />)}
      </div>
    ) : (
      <div className="h-[11px]" />
    )}
  </section>
);

/* ---------- main toolbar ---------- */

const Disk = ({ w = 30 }: { w?: number }) => (
  <g>
    <rect x="1" y="1" width={w} height="29" fill="#b9b9b9" />
    <rect x="7" y="1" width="17" height="11" fill="#f2f2f2" stroke={BG} strokeWidth="1" />
    <rect x="8" y="20" width="15" height="10" fill="#f2f2f2" stroke={BG} strokeWidth="1" />
    <rect x="11" y="23" width="3" height="5" fill={BG} />
  </g>
);
const Page = ({ x = 4 }: { x?: number }) => <P d={`M${x} 0h18v9h9v23H${x}zM${x + 20} 0l7 7h-7z`} />;
const Arrow = ({ x, y }: { x: number; y: number }) => <path d={`M${x} ${y - 3}h9v-5l9 8-9 8v-5h-9z`} fill={B} stroke={BG} strokeWidth="1" />;
const Printer = () => (
  <g>
    <rect x="6" y="0" width="20" height="11" fill="#f6f6f6" />
    <rect x="0" y="9" width="32" height="17" fill="#f0f0f0" />
    <rect x="0" y="16" width="32" height="7" fill="#c4c4c4" />
    <L d="M6 10h20M5 19h22" c={BG} w={1.5} />
    <rect x="7" y="20" width="18" height="12" fill={B} stroke="#fff" strokeWidth="2" />
  </g>
);
const Sheet = () => (
  <g>
    <P d="M1 0h17v8h8v20H1zM19 0l6 7h-6z" />
    <L d="M1 5h14M6 0v28M1 23h18" c="#8b8b8b" />
  </g>
);

const toolbar: Tool[][] = [
  [
    { name: 'New', art: <P d="M0 4h20v9h11v15H0zM23 4l8 8h-8z" /> },
    { name: 'Open', art: <P d="M0 4h11l3 4h9v3H9L3 27l-3 1zM9 12h22l-7 16H2z" /> },
    { name: 'Save', art: <Disk /> },
    { name: 'Save as', art: <g><Disk w={26} /><Pencil x={15} y={15} k={0.55} /></g> },
  ],
  [
    { name: 'Undo', art: <P d="M0 16L14 7v6c10 0 16 3 17 11-4-4-9-5-17-5v6z" /> },
    { name: 'Redo', art: <P d="M31 16L17 7v6C7 13 1 16 0 24c4-4 9-5 17-5v6z" /> },
  ],
  [
    { name: 'Print', art: <Printer /> },
    { name: 'Batch print', art: <g><Printer /><Arrow x={14} y={24} /></g> },
    { name: 'Page setup', art: <g><Sheet /><Form x={13} y={16} /></g> },
    { name: 'Plot styles', art: <g><Sheet /><Pencil x={15} y={15} k={0.55} /></g> },
  ],
  [
    { name: 'Import', art: <g><Page /><Arrow x={0} y={12} /></g> },
    { name: 'Export', art: <g><Page x={0} /><Arrow x={14} y={22} /></g> },
    { name: 'Attach', art: <g><P d="M0 19h11V8h12v8h9v15H0zM25 8l6 6h-6z" /><rect x="-1" y="-1" width="12" height="20" fill={BG} /><path d="M7 5v9a2 2 0 0 1-4 0V4a3.500 3.500 0 0 1 7 0v10a5 5 0 0 1-10 1" fill="none" stroke={B} strokeWidth="2" /></g> },
    { name: 'Save to web', art: <g><Disk w={28} /><circle cx="23" cy="9" r="9" fill={BG} /><circle cx="23" cy="9" r="8" fill="none" stroke={B} strokeWidth="2" /><L d="M15 9h16M23 1v16M23 1q-7 8 0 16M23 1q7 8 0 16" c={B} w={1.5} /></g> },
  ],
  [
    { name: 'Zoom window', art: <g><L d="M18 27H1V1h28v14" /><circle cx="24" cy="22" r="5" fill="none" stroke="#eee" strokeWidth="2" /><L d="M28 27l4 4" c={TAN} w={2.4} /></g> },
    { name: 'Pan', art: <g><path d="M2 17l7 6M11 18L7 6m6 11L13 2m5 15l2-15m2 17l7-12" fill="none" stroke={G} strokeWidth="3.600" strokeLinecap="round" /><P d="M7 20l3-5h12l3 4-3 8q-2 5-6 5-6 0-8-6l-3-5z" /></g> },
    { name: 'Orbit', art: <g><ellipse cx="16" cy="16" rx="6" ry="15" fill="none" stroke="#fff" strokeWidth="2.2" /><L d="M8 10c-9 4-9 9-3 12M13 24c10 1 16-2 17-7 0-3-3-5-6-6" c="#fff" w={2.2} /><P d="M18 19v10l-7-5zM21 8l7-1-4 7z" c="#fff" /><L d="M16 12v8M12 16h8" c={B} /></g> },
  ],
  [
    { name: 'Match properties', art: <g><rect x="1" y="0" width="22" height="28" fill={G} /><rect x="5" y="4" width="12" height="8" fill={B} stroke="#444" strokeWidth="2" /><L d="M5 17h12M11 14v6M5 23h8" c="#555" /><P d="M14 20l6-3 10 12-6 3z" c={Y} /><P d="M19 18l6 2 6-3-6 8z" c="#fff" /></g> },
    { name: 'Quick select', art: <g><P d="M12 0h8l-3 6h6L10 17l3-7H8z" c={Y} /><P d="M0 7l14 13-6 1 4 9-4 1-4-8-4 4z" c="#fff" /><ListCard x={15} y={14} w={17} h={18} /></g> },
    { name: 'Isolate', art: <g><rect x="0" y="0" width="16" height="16" fill="#9a9a9a" /><circle cx="20" cy="11" r="10" fill={GR} stroke={BG} /><circle cx="11" cy="21" r="10" fill={GR} stroke={BG} /><L d="M20 9v23M10 21h21" c="#fff" /><rect x="15" y="16" width="10" height="10" fill={BG} stroke="#fff" strokeWidth="2" /><L d="M20 16v10M15 21h10" c="#fff" /></g> },
    { name: 'Layer translate', art: <g><circle cx="7" cy="7" r="7" fill={GR} /><circle cx="25" cy="25" r="7" fill="#97caf3" /><L d="M16 5h9v5" c="#fff" /><P d="M20 8h9l-4 6z" c="#fff" /></g> },
    { name: 'Clean up', art: <g><P d="M1 0h17v8h8v20H1zM19 0l6 7h-6z" /><P d="M8 8h4l2 13 4 5 2 7H0l2-7 4-5z" c={BG} /><L d="M10 9v10" c={TAN} w={3} /><P d="M10 15l5 9H5z" c={TAN} /><P d="M5 26h10l2 6H3z" c={Y} /></g> },
    { name: 'Count', art: <g><circle cx="11" cy="17" r="10" fill="#6f737c" stroke={G} strokeWidth="2" /><rect x="11" y="18" width="19" height="13" fill="#6f737c" stroke={G} strokeWidth="2" /><rect x="16" y="-1" width="16" height="18" fill={BG} /><L d="M21 0l-1 16M28 0l-1 16M17 5h15M16 11h15" c={B} /></g> },
  ],
  [
    { name: 'Compare', art: <g><P d="M0 2h13v28H0zM19 2h4v9h8v19H19zM25 2l6 7h-6z" /><L d="M15 0v32" c={B} /><rect x="6" y="9" width="5" height="6" fill="none" stroke="#c4443f" strokeWidth="2" /><rect x="6" y="18" width="5" height="6" fill="none" stroke="#3d9140" strokeWidth="2" /><rect x="21" y="13" width="5" height="5" fill="none" stroke="#888" strokeWidth="2" /><rect x="21" y="21" width="5" height="5" fill="none" stroke="#888" strokeWidth="2" /></g> },
    { name: 'Share', art: <P d="M32 2L0 15l9 4zM31 3L10 20l2 9zM32 3L18 21l9 9z" c={B} /> },
    { name: 'Activity', art: <g><rect x="1" y="3" width="25" height="21" fill="#4a6683" stroke={B} strokeWidth="2" /><path d="M5 16q3-8 6-2t5 3 6 0" fill="none" stroke={B} strokeWidth="2" /><L d="M28 8h3v21H8v-3" c="#eee" /></g> },
    { name: 'Markup import', badge: true, art: <g><L d="M8 17v11h22V11" c={B} /><path d="M3 5q2-5 6-2 5-2 5 3 4 2 0 6-1 4-6 2-5 2-5-3-4-3 0-6z" fill="none" stroke={G} strokeWidth="2" /><L d="M18 4h5v9" c="#fff" /><P d="M18 12h10l-5 7z" c="#fff" /></g> },
  ],
  [{ name: 'Tasks', badge: true, art: <g><rect x="0" y="4" width="25" height="26" fill={G} /><rect x="6" y="0" width="12" height="6" fill="#fff" /><L d="M4 11h3M9 11h11M4 17h3M9 17h11M4 23h3M9 23h6" c="#4b87cf" /><path d="M25 14l-9 11h5l-2 8 11-12h-6z" fill={Y} stroke={BG} /></g> }],
];

const Toolbar = () => (
  <div className="flex h-[59px] items-start gap-24 pl-[388px] pt-[10px]" role="toolbar">
    {toolbar.map((group, gi) => (
      <div key={gi} className="flex gap-[34px]">
        {group.map((t) => (
          <button key={t.name} type="button" aria-label={t.name} className="relative">
            <svg className="size-8 overflow-visible" viewBox="0 0 32 32">{t.art}</svg>
            {t.badge && <Badge className="-right-4 -top-1.5" />}
          </button>
        ))}
      </div>
    ))}
  </div>
);

/* ---------- drawing ---------- */

const mix = (a: number[], b: number[], t: number) => `rgb(${a.map((v, i) => Math.round(v + (b[i] - v) * t)).join(',')})`;

// shaded cone surface as thin slices from the apex to the rim
const ConeFan = ({ cy, from, to, stops }: { cy: number; from: number; to: number; stops: number[][] }) => {
  const n = 30;
  const pt = (t: number) => {
    const a = ((from + (to - from) * t) * Math.PI) / 180;
    return `${1427 + 267 * Math.cos(a)} ${cy + 118 * Math.sin(a)}`;
  };
  return (
    <g>
      {Array.from({ length: n }, (_, i) => {
        const p = (i / (n - 1)) * (stops.length - 1);
        const k = Math.min(Math.floor(p), stops.length - 2);
        const c = mix(stops[k], stops[k + 1], p - k);
        return <path key={i} d={`M1427 936L${pt(i / n)}L${pt((i + 1) / n)}z`} fill={c} stroke={c} />;
      })}
    </g>
  );
};

const Model3D = () => (
  <svg className="absolute inset-0 size-full" viewBox="370 237 2606 1540" aria-label="Double cone with circular section">
    <defs>
      <linearGradient id="rim" x1="0" x2="1"><stop offset="0" stopColor="#737577" /><stop offset="0.5" stopColor="#848788" /><stop offset="1" stopColor="#878989" /></linearGradient>
      <linearGradient id="base" x1="0" x2="1"><stop offset="0" stopColor="#8c9090" /><stop offset="0.7" stopColor="#848888" /><stop offset="1" stopColor="#6b6d6e" /></linearGradient>
      <linearGradient id="cut" x1="0" x2="1"><stop offset="0" stopColor="#968683" /><stop offset="0.55" stopColor="#847371" /><stop offset="1" stopColor="#655450" /></linearGradient>
      <linearGradient id="zbar" x1="0" x2="1"><stop offset="0" stopColor="#3f5fa5" /><stop offset="0.7" stopColor="#5076c4" /><stop offset="1" stopColor="#7596dc" /></linearGradient>
    </defs>
    <ConeFan cy={456} from={166} to={14} stops={[[80, 81, 82], [92, 93, 94], [103, 104, 105], [112, 113, 114], [124, 125, 126], [116, 117, 118]]} />
    <ellipse cx="1427" cy="456" rx="267" ry="118" fill="url(#rim)" stroke="#fff" strokeWidth="1.2" />
    <path d="M1174 420L1427 936L1508 345" fill="none" stroke="#b4b4b4" strokeWidth="1.1" />
    <path d="M1348 571L1427 936L1686 485" fill="none" stroke="#fff" strokeWidth="1.2" />
    <ConeFan cy={1415} from={194} to={-14} stops={[[132, 136, 136], [138, 142, 142], [130, 134, 134], [119, 122, 123], [104, 106, 107], [80, 82, 83], [88, 90, 91]]} />
    <ellipse cx="1427" cy="1415" rx="267" ry="118" fill="url(#base)" />
    <path d="M1168 1386A267 118 0 0 1 1686 1386" fill="none" stroke="#b4b6b6" strokeWidth="1.2" />
    <path d="M1168 1386A267 118 0 1 0 1686 1386" fill="none" stroke="#fff" strokeWidth="1.2" />
    <ellipse cx="1427" cy="1175" rx="133" ry="59" fill="url(#cut)" stroke="#fff" strokeWidth="1.2" />
    <path d="M1427 936L1507 1301" fill="none" stroke="#b5b2b2" strokeWidth="1.1" />
    <path d="M1168 1386L1427 936L1347 1526M1427 936L1682 1450" fill="none" stroke="#fff" strokeWidth="1.2" />
    {/* UCS icon */}
    <path d="M1434 1409l22-36" stroke="#437a35" strokeWidth="11" strokeLinecap="round" />
    <path d="M1428 1415l90 12" stroke="#9c4f4b" strokeWidth="12" strokeLinecap="round" />
    <path d="M1428 1414l91 12" stroke="#e08985" strokeWidth="5" strokeLinecap="round" />
    <rect x="1422" y="1325" width="11" height="92" rx="3" fill="url(#zbar)" />
    <g fontFamily="Inter, sans-serif" fontWeight="200" fontSize="33" textAnchor="middle">
      <text x="1435" y="1320" fill="#3f62bd">Z</text>
      <text x="1463" y="1365" fill="#5f9b51">Y</text>
      <text x="1525" y="1419" fill="#c04f4a">X</text>
    </g>
    {/* crosshair */}
    <path d="M2287 1169v91M2287 1274v41" stroke="#5261a8" strokeWidth="1.6" />
    <path d="M2236 1262l44 4M2295 1268l97 13" stroke="#a8545a" strokeWidth="1.6" />
    <path d="M2272 1290l11-16M2291 1260l29-39" stroke="#5a9a5c" strokeWidth="1.6" />
    <rect x="2281" y="1261" width="13" height="13" fill="none" stroke="#cfcfcf" strokeWidth="1.6" />
  </svg>
);

const ViewCube = () => (
  <svg className="absolute right-5 top-[83px] w-[280px] overflow-visible" viewBox="2676 320 280 216" aria-label="View cube">
    <defs>
      <linearGradient id="front" x1="0" y1="0" x2="0" y2="1"><stop offset="0" stopColor="#bcbdbf" /><stop offset="1" stopColor="#98999b" /></linearGradient>
    </defs>
    <ellipse cx="2814" cy="452" rx="115" ry="60" fill="none" stroke="#4a4e55" strokeWidth="26" />
    <ellipse cx="2814" cy="451" rx="98" ry="51" fill="#212830" />
    <path d="M2750 366l35-36 88 10-24 37z" fill="#b3b4b6" />
    <path d="M2750 366l99 11-2 91-94-15z" fill="url(#front)" />
    <path d="M2849 377l24-37-3 84-23 44z" fill="#a2a3a5" />
    <path d="M2768 366l6-5 60 7-4 24-62-7z" fill="#a3a8ae" opacity="0.8" />
    <path d="M2750 366l99 11 24-37M2849 377l-2 91" fill="none" stroke="#6c6e71" strokeWidth="1.2" />
    <g fontFamily='"Open Sans", sans-serif' fontWeight="700" textAnchor="middle" fill="#505358">
      <text x="2800" y="426" fontSize="22" transform="rotate(6 2800 418)">FRONT</text>
      <text x="2815" y="358" fontSize="16" fontStyle="italic" transform="rotate(5 2815 352)">TOP</text>
      <text x="2860" y="406" fontSize="12" transform="rotate(-66 2860 402)">RIGHT</text>
    </g>
    <g fontFamily='"Open Sans", sans-serif' fontWeight="700" textAnchor="middle" fill="#b2b3b5">
      <text x="2709" y="437" fontSize="28" fontStyle="italic" transform="rotate(12 2709 428)">W</text>
      <text x="2931" y="475" fontSize="33" fontStyle="italic" transform="rotate(6 2931 464)">E</text>
      <text x="2771" y="524" fontSize="37" fontStyle="italic">S</text>
    </g>
  </svg>
);

const CommandPanel = () => (
  <div className="relative mx-auto mb-px mt-auto w-[1000px] font-['Open_Sans',sans-serif] text-[#b9bbbf]">
    <div className="relative ml-20 h-[129px] bg-[#3c4553] pl-[10px] pt-2 text-xl leading-[30px]">
      <p className="whitespace-pre-wrap pr-9">Autodesk DWG.  This file is a TrustedDWG last saved by an Autodesk application or Autodesk licensed application.</p>
      <p>Command:</p>
      <p>Command:</p>
      <span className="absolute bottom-1 right-[11px] h-[42px] w-2 rounded-full bg-[#9b9ea4]" />
    </div>
    <div className="flex h-[50px] items-center bg-[#3c4553] pl-[17px]">
      <button type="button" aria-label="Recent commands" className="flex items-center">
        <svg width="44" height="24" viewBox="0 0 44 24">
          <path d="M1 3l8 5-8 5" fill="none" stroke="#c4c5c8" strokeWidth="2.4" />
          <path d="M14 19h13" stroke="#c4c5c8" strokeWidth="2" />
          <path d="M31 7h12l-6 7z" fill="#b4b5b8" />
        </svg>
      </button>
      <input aria-label="Command line" placeholder="Type a command" className="ml-[29px] min-w-0 flex-1 bg-transparent text-[23px] italic outline-none placeholder:text-[#8f959f]" />
      <svg className="mr-[23px]" width="12" height="8" viewBox="0 0 12 8"><path d="M0 0h12L6 8z" fill="#9b9ea4" /></svg>
      <button type="button" aria-label="Share history" className="mr-5">
        <svg width="26" height="28" viewBox="0 0 26 28">
          <path d="M10 9H1v17h24V9h-7M7 10v15" fill="none" stroke="#d8d8da" strokeWidth="2" />
          <path d="M14 17V4" stroke={B} strokeWidth="2" /><path d="M14 0l5 7H9z" fill={B} />
        </svg>
      </button>
    </div>
  </div>
);

/* ---------- status bar ---------- */

const W = '#dcdcdd';
const status: { name: string; on?: boolean; art: React.ReactNode }[] = [
  { name: 'Grid', art: <L d="M9 1v30M16 1v30M23 1v30M1 9h30M1 16h30M1 23h30" c={W} /> },
  { name: 'Snap', art: <g>{[4, 14, 24].map((y) => [4, 14, 24].map((x) => <Sq key={`${x}${y}`} x={x + 2} y={y + 2} s={4} f={W} />))}</g> },
  { name: 'Ortho', art: <L d="M1 1v30h31M1 20h11v11" c={W} /> },
  { name: 'Polar', on: true, art: <g><circle cx="15" cy="17" r="12" fill="none" stroke="#fff" strokeWidth="2" /><L d="M15 17h16M15 17L28 3" c="#fff" /></g> },
  { name: 'Dynamic input', art: <g><L d="M7 2v12M1 8h12" c={W} /><rect x="13" y="18" width="19" height="8" fill={W} /><L d="M16 20v4" c={BG} /></g> },
  { name: 'Lineweight', art: <P d="M0 4h32v2H14v4H0zM0 12h32v3H14v4H0zM0 21h32v2H16v6H0z" c={W} /> },
  { name: 'Transparency', on: true, art: <g><rect x="3" y="3" width="26" height="26" fill="none" stroke="#fff" strokeWidth="2" />{[0, 1, 2, 3, 4].map((r) => [0, 1, 2, 3, 4].map((c) => (r + c) % 2 === 0 && <rect key={`${r}${c}`} x={6 + c * 4} y={6 + r * 4} width="4" height="4" fill="#fff" />))}</g> },
  { name: 'Selection cycling', on: true, art: <g><L d="M6 2H1v27h5M19 2h5v12" c="#fff" /><rect x="8" y="6" width="8" height="7" fill="none" stroke="#fff" strokeWidth="2" /><circle cx="12" cy="21" r="4" fill="none" stroke="#fff" strokeWidth="2" /><P d="M17 13l12 12h-6l2 6-3 1-2-6-3 2z" c="#fff" /></g> },
  { name: '3D snap', art: <g><L d="M32 29H1L24 5" c={W} /><circle cx="13" cy="17" r="3" fill={W} /></g> },
  { name: 'Object snap', on: true, art: <g><L d="M9 6h22v24H4V12" c="#fff" /><rect x="1" y="2" width="7" height="8" fill="none" stroke="#fff" strokeWidth="2" /></g> },
  { name: 'Annotation visibility', on: true, art: <g><P d="M14 2l5 14v6l8 9h-7l-6-5-6 5H1l8-9v-6z" c="#fff" /><circle cx="26" cy="10" r="5" fill="none" stroke="#fff" strokeWidth="2" /></g> },
  { name: 'Auto scale', art: <g><P d="M14 2l5 14v6l8 9h-7l-6-5-6 5H1l8-9v-6z" c={W} /><P d="M27 2l-7 9h4l-2 6 9-9h-4z" c={W} /></g> },
  { name: 'Annotation scale', art: <P d="M15 2l5 14v6l8 9h-7l-6-5-6 5H2l8-9v-6z" c={W} /> },
];

const StatusBar = () => (
  <footer className="flex h-[47px] shrink-0 items-stretch border-t border-[#212830] bg-linear-to-b from-[#3c4554] to-[#383d4b] pb-0.5 font-['Open_Sans',sans-serif] text-[#b6b7ba]">
    <button type="button" className="w-[119px] border-r-2 border-[#212834] bg-[#4c586d] pr-1 text-[22px] font-semibold text-white">Model</button>
    <button type="button" aria-label="New layout" className="flex w-[46px] items-center justify-center border-r-2 border-[#212834]">
      <svg width="22" height="22" viewBox="0 0 22 22"><L d="M11 0v22M0 11h22" /></svg>
    </button>
    <button type="button" className="w-[118px] border-r-2 border-[#212834] pr-2 text-[22px] text-[#8f959e]">a3rd</button>
    <div className="ml-auto flex items-center border-l-2 border-[#212834] pl-6">
      <span className="w-[223px] whitespace-pre font-['Roboto',sans-serif] text-2xl">2.698,  2.160 , 0.000</span>
      <div className="flex gap-1">
        {status.map((s) => (
          <button key={s.name} type="button" aria-label={s.name} aria-pressed={!!s.on} className={`flex size-10 items-center justify-center ${s.on ? 'bg-[#5f87bb]' : ''}`}>
            <svg className="size-8" viewBox="0 0 32 32">{s.art}</svg>
          </button>
        ))}
      </div>
      <button type="button" className="flex items-center gap-2 font-['Roboto',sans-serif] text-[23px]">
        1:1
        <svg width="12" height="9" viewBox="0 0 12 9"><path d="M0 0h12L6 9z" fill={W} /></svg>
      </button>
      <button type="button" aria-label="Isolate objects" className="ml-[13px]">
        <svg width="34" height="34" viewBox="0 0 34 34">
          <g fill="none" stroke={W} strokeWidth="2"><rect x="2" y="3" width="12" height="11" /><circle cx="27" cy="14" r="5" /><path d="M14 21l6 11H8z" /></g>
        </svg>
      </button>
      <button type="button" aria-label="Customization" className="ml-2.5 mr-4"><Gear size={30} color={W} /></button>
    </div>
  </footer>
);

/* ---------- dock ---------- */

const sq = (fill: string) => <rect width="80" height="80" rx="18" fill={fill} />;

const petals = ['#f3a13b', '#efd63e', '#a3cf57', '#6cb68f', '#6ea6dd', '#8377bb', '#b87bb2', '#e8583f'];

type DockApp = { name: string; run?: boolean; art: React.ReactNode };

const dockMain: DockApp[] = [
  { name: 'Finder', run: true, art: <g clipPath="url(#tile)">{sq('url(#dFinder)')}<path d="M44 0C38 16 35 32 34 47h12q-1 14 2 33h32V0z" fill="#dfe5ee" /><path d="M22 23v7M58 23v7" stroke="#22303f" strokeWidth="3.4" strokeLinecap="round" /><path d="M16 53q24 22 48 0" fill="none" stroke="#1c2733" strokeWidth="3" strokeLinecap="round" /></g> },
  { name: 'Launchpad', art: <g>{sq('#b5bac3')}{['#6ed453', '#f5b941', '#ef9139', '#c73a32', '#9da0a5', '#f0495e', '#8b45c9', '#2fa4f3', '#51cfa6'].map((c, i) => <rect key={i} x={13 + (i % 3) * 20} y={13 + Math.floor(i / 3) * 20} width="15" height="15" rx="4" fill={c} />)}</g> },
  { name: 'Safari', run: true, art: <g>{sq('#f4f4f5')}<circle cx="40" cy="40" r="34" fill="url(#dBlue)" /><circle cx="40" cy="40" r="30" fill="none" stroke="#e4f0fb" strokeWidth="4" strokeDasharray="1 2.6" /><path d="M64 18L44 45l-8-9z" fill="#e2503f" /><path d="M16 62l20-26 8 9z" fill="#f2f2f2" /></g> },
  { name: 'Messages', run: true, art: <g>{sq('url(#dGreen)')}<path d="M40 14c17 0 29 11 29 25S57 63 40 63q-5 0-9-1-3 4-9 4 3-4 2-8c-8-4-13-11-13-19 0-14 12-25 29-25z" fill="url(#dPearl)" /></g> },
  { name: 'Mail', run: true, art: <g>{sq('url(#dMail)')}<rect x="12" y="22" width="56" height="36" rx="4" fill="#ededed" /><path d="M14 24l22 22q4 4 8 0l22-22M14 56l18-15M66 56L48 41" fill="none" stroke="#a9aaad" strokeWidth="1.8" /></g> },
  { name: 'Maps', art: <g clipPath="url(#tile)">{sq('#f1f1f3')}<path d="M0 0h18v44L0 30z" fill="#86d67a" /><path d="M44 0h12q2 20 24 32v30L44 22z" fill="#69cb62" /><path d="M0 38l26 22v20H0z" fill="#dd86c4" /><path d="M44 60l28 20H40z" fill="#f5c644" /><path d="M22 0h16v40H22z" fill="#3f7df0" /><path d="M54 0q2 18 26 26" fill="none" stroke="#c9ccd1" strokeWidth="5" /><circle cx="30" cy="50" r="19" fill="#3a7bf0" stroke="#fff" strokeWidth="3" /><path d="M30 37l9 23-9-5-9 5z" fill="#fff" /></g> },
  { name: 'Photos', art: <g>{sq('#fbfbfb')}{petals.map((c, i) => <rect key={c} x="31" y="5" width="18" height="33" rx="9" fill={c} opacity="0.85" transform={`rotate(${i * 45} 40 40)`} />)}</g> },
  { name: 'FaceTime', art: <g>{sq('url(#dGreen)')}<rect x="12" y="22" width="39" height="36" rx="9" fill="url(#dPearl)" /><path d="M54 35l12-9v28l-12-9z" fill="#e4f3e0" /></g> },
  { name: 'Calendar', art: <g clipPath="url(#tile)">{sq('#f8f8f8')}<rect width="80" height="25" fill="#e0584e" /><T x={40} y={19} s={15} c="#fff" w={600}>OUT.</T><T x={39} y={67} s={48} c="#222" w={300}>10</T></g> },
  { name: 'Contacts', art: <g><rect x="60" y="10" width="22" height="60" rx="6" fill="#6bb6e8" /><rect x="60" y="40" width="22" height="30" rx="6" fill="#5dbb56" /><rect x="60" y="42" width="22" height="14" fill="#ee8b3a" /><rect width="77" height="80" rx="18" fill="#a3804d" /><circle cx="40" cy="40" r="25" fill="none" stroke="#876735" strokeWidth="2" /><circle cx="40" cy="34" r="9" fill="#866837" /><path d="M23 57q4-11 17-11t17 11q-7 8-17 8t-17-8z" fill="#866837" /></g> },
  { name: 'Reminders', art: <g>{sq('#f9f9f9')}{['#3478f0', '#e24b40', '#f0952d'].map((c, i) => <g key={c}><circle cx="15" cy={20 + i * 20} r="6" fill="none" stroke={c} strokeWidth="1.6" /><circle cx="15" cy={20 + i * 20} r="3.6" fill={c} /><path d={`M30 ${20 + i * 20}h41`} stroke="#b9babd" strokeWidth="1.6" /></g>)}</g> },
  { name: 'Notes', run: true, art: <g clipPath="url(#tile)">{sq('#f2f1ee')}<rect width="80" height="21" fill="#f6cd45" /><path d="M0 24h80" stroke="#a8a598" strokeWidth="2" strokeDasharray="1.5 2" /><path d="M0 40h80M0 60h80" stroke="#d2d1cd" strokeWidth="1.6" /></g> },
  { name: 'Freeform', art: <g>{sq('#fdfdfd')}<circle cx="32" cy="48" r="23" fill="#ee7268" /><rect x="27" y="10" width="43" height="43" rx="6" fill="#62c9f3" /><path d="M27 53V28q5-3 11-2 11 2 15 12 4 8 2 15z" fill="#6f9fcf" /><path d="M16 51C19 38 26 28 31 29c6 2-3 20 1 21 5 1 8-21 14-21 6 1-3 18 2 18 4 0 6-9 10-9 4 0 2 5 6 5 3 0 6-3 8-7" fill="none" stroke="#143d63" strokeWidth="4" strokeLinecap="round" /></g> },
  { name: 'TV', art: <g>{sq('url(#dDark)')}<FaApple x="10" y="24" size="28" color="#fff" /><T x={53} y={53} s={29} c="#fff" w={500}>tv</T></g> },
  { name: 'Music', art: <g>{sq('url(#dRed)')}<path d="M28 20l30-7v37a8 8 0 1 1-5-8V27l-20 5v26a8 8 0 1 1-5-8z" fill="#fff" /></g> },
  { name: 'Keynote', art: <g>{sq('url(#dKey)')}<path d="M20 12h40l4 24H16z" fill="#f3f6fa" /><circle cx="40" cy="21" r="8" fill="#52b45b" /><path d="M40 21v-8a8 8 0 0 1 8 8z" fill="#3e82e0" /><path d="M40 21l-8 0a8 8 0 0 1 8-8z" fill="#d94c77" /><path d="M16 30h48v6H16z" fill="#c9d4e4" /><path d="M40 36v31M29 68h22" stroke="#dfe7f2" strokeWidth="3.4" /></g> },
  { name: 'Numbers', art: <g>{sq('url(#dGreen)')}<path d="M20 68V52M33 68V39M47 68V12M61 68V27" stroke="#f7fbf5" strokeWidth="10" /></g> },
  { name: 'Pages', art: <g>{sq('url(#dOrange)')}<path d="M15 66l10-20 31-31q9-2 8 6L32 54z" fill="#fbf6ef" /><path d="M18 68h50" stroke="#f8cf9d" strokeWidth="2.4" /></g> },
  { name: 'App Store', art: <g>{sq('url(#dStore)')}<path d="M36 18l25 44M44 18L26 50M15 50h50M22 58l-3 5" stroke="#fff" strokeWidth="7" strokeLinecap="round" /></g> },
  { name: 'Settings', art: <g>{sq('url(#dSilver)')}<circle cx="40" cy="40" r="32" fill="none" stroke="#3a3b3d" strokeWidth="5" strokeDasharray="2 1.4" /><circle cx="40" cy="40" r="28" fill="#4b4c4e" /><circle cx="40" cy="40" r="22" fill="none" stroke="#a6a7a9" strokeWidth="3" /><circle cx="40" cy="40" r="13" fill="none" stroke="#85868a" strokeWidth="4" /><path d="M40 40h24M40 40L28 19M40 40L28 61" stroke="#b5b6b8" strokeWidth="3.5" /></g> },
  { name: 'AutoCAD', run: true, art: <g>{sq('#fff')}<path d="M10 14l8-6h52v11l-6 44H10z" fill="#cf2f50" /><path d="M10 14l8-6v46l-8 8z" fill="#e0567a" /><path d="M65 18h5v54H65z" fill="#7c1a2e" /><rect x="15" y="53" width="52" height="19" fill="#771429" /><T x={42} y={43} s={36} c="#fff" w={700}>A</T><T x={41} y={68} s={14} c="#fff" w={700}>CAD</T></g> },
];

const dockRecent: DockApp[] = [
  { name: 'Word', run: true, art: <g>{sq('#fff')}<rect x="21" y="13" width="45" height="54" rx="3" fill="#2b7cd3" /><rect x="21" y="13" width="45" height="14" rx="3" fill="#4ba0e8" /><rect x="21" y="40" width="45" height="14" fill="#2159b8" /><rect x="21" y="53" width="45" height="14" rx="3" fill="#173f88" /><rect x="7" y="25" width="30" height="30" rx="3" fill="#2355b0" /><T x={22} y={48} s={20} c="#fff" w={700}>W</T></g> },
  { name: 'WhatsApp', run: true, art: <g>{sq('url(#dGreen)')}<FaWhatsapp x="5" y="5" size="70" color="#fff" /></g> },
  { name: 'Chrome', run: true, art: <g>{sq('#f4f4f5')}<circle cx="40" cy="40" r="35" fill="#f4bf3b" /><path d="M9.700 22.500A35 35 0 0 1 70.300 22.500L40 23z" fill="#d94d3c" /><path d="M9.700 22.500A35 35 0 0 0 40 75L54 48H28z" fill="#43a050" /><circle cx="40" cy="40" r="17" fill="#fff" /><circle cx="40" cy="40" r="13.500" fill="#3d7ce8" /></g> },
  { name: 'PowerPoint', run: true, art: <g>{sq('#fff')}<circle cx="43" cy="40" r="27" fill="#d2603e" /><path d="M43 13a27 27 0 0 1 27 27H43z" fill="#f0926f" /><rect x="9" y="25" width="30" height="30" rx="3" fill="#bd4220" /><T x={24} y={48} s={21} c="#fff" w={700}>P</T></g> },
];

const Trash = () => (
  <svg className="w-20 overflow-visible" viewBox="0 0 80 80">
    <path d="M8 6l9-9 7 4 6-7 8 6 9-7 6 8 8-3 9 10-5 10H12z" fill="#e2e2e3" />
    <path d="M14 6l8-8 4 10zM40 4l8-7 5 11zM56 8l9-4 2 8z" fill="#7b7773" />
    <path d="M26 8l6 5 6-7 4 9z" fill="#4ca3a0" />
    <path d="M5 4l8 72q2 8 27 8t27-8l8-72q-8 9-35 9T5 4z" fill="url(#dTrash)" />
  </svg>
);

const DockIcon = ({ app }: { app: DockApp }) => (
  <button type="button" aria-label={app.name} className="relative">
    <svg className="size-20 overflow-visible" viewBox="0 0 80 80">{app.art}</svg>
    {app.run && <span className="absolute -bottom-6 left-9 size-2 rounded-full bg-[#b3bfdd]" />}
  </button>
);

const grads: [string, string, string][] = [
  ['dFinder', '#55c1f9', '#2b6de8'], ['dBlue', '#3ba6ef', '#2668dc'], ['dGreen', '#86f07e', '#55bf48'], ['dPearl', '#ffffff', '#cfe6c9'],
  ['dMail', '#3573ea', '#5bb8f7'], ['dDark', '#2c3430', '#0c0e0e'], ['dRed', '#ef6378', '#e23b47'], ['dKey', '#5ab9f8', '#2e62e8'],
  ['dOrange', '#f6b24a', '#ee8b35'], ['dStore', '#4db4f3', '#2a5ddc'], ['dSilver', '#cfd9e2', '#8f8e8b'], ['dTrash', '#8c8e91', '#6d6f72'],
];

const Dock = () => (
  <nav aria-label="Dock" className="mx-[88px] mb-[9px] mt-[3px] flex h-[128px] shrink-0 items-start justify-between rounded-[34px] border-2 border-[#56647a] bg-[linear-gradient(90deg,#223643,#2f3f5a_16%,#414a70_28%,#50558a_42%,#333f5c_50%,#22323e_58%,#22323e_68%,#363f60_76%,#2b3a4e_90%,#22303f)] pl-[17px] pr-4 pt-4">
    <svg className="absolute size-0" aria-hidden="true">
      <defs>
        <clipPath id="tile"><rect width="80" height="80" rx="18" /></clipPath>
        {grads.map(([id, a, b]) => (
          <linearGradient key={id} id={id} x1="0" y1="0" x2="0" y2="1"><stop offset="0" stopColor={a} /><stop offset="1" stopColor={b} /></linearGradient>
        ))}
      </defs>
    </svg>
    {dockMain.map((a) => <DockIcon key={a.name} app={a} />)}
    <span className="mx-[11px] h-24 w-0.5 bg-[#6a7590]" />
    {dockRecent.map((a) => <DockIcon key={a.name} app={a} />)}
    <span className="mx-[11px] h-24 w-0.5 bg-[#6a7590]" />
    <button type="button" aria-label="Trash"><Trash /></button>
  </nav>
);

/* ---------- chrome ---------- */

const menus = ['File', 'Edit', 'View', 'Insert', 'Format', 'Tools', 'Draw', 'Dimension', 'Modify'];

const MenuBar = () => (
  <header className="flex h-[75px] shrink-0 items-center bg-linear-to-r from-[#43528a] via-[#5e6aa2] via-50% to-[#4b588f] pl-[39px] pr-8 font-['Inter',sans-serif] text-[25px] font-medium text-white">
    <FaApple size={30} />
    <nav className="ml-9 flex items-center gap-[38px]">
      <button type="button" className="text-[26px] font-bold">AutoCAD 2026</button>
      {menus.map((m) => <button key={m} type="button">{m}</button>)}
    </nav>
    {/* camera notch */}
    <div className="w-[465px]" />
    <nav className="flex gap-[38px]">
      <button type="button">Window</button>
      <button type="button">Help</button>
    </nav>
    <div className="ml-auto flex items-center">
      <svg width="52" height="26" viewBox="0 0 52 26">
        <rect x="1" y="1" width="45" height="23" rx="7" fill="none" stroke="#a5acce" strokeWidth="2" />
        <rect x="4" y="4" width="6" height="17" rx="3" fill="#fff" /><path d="M48 9q4 4 0 8z" fill="#a5acce" />
      </svg>
      <svg className="ml-9" width="36" height="26" viewBox="0 0 36 26" fill="none" stroke="#f1f2f8" strokeWidth="4">
        <path d="M2 9q16-14 32 0M8 15q10-9 20 0" /><path d="M18 26l-5-5q5-4 10 0z" fill="#f1f2f8" stroke="none" />
      </svg>
      <svg className="ml-9" width="28" height="28" viewBox="0 0 28 28" fill="none" stroke="#f1f2f8" strokeWidth="3">
        <circle cx="11" cy="11" r="9" /><path d="M18 18l8 8" strokeLinecap="round" />
      </svg>
      <svg className="ml-[39px]" width="28" height="28" viewBox="0 0 28 28">
        <rect x="1.500" y="1.500" width="25" height="10" rx="5" fill="none" stroke="#f1f2f8" strokeWidth="3" /><circle cx="7" cy="6.500" r="3" fill="#f1f2f8" />
        <rect x="0" y="15" width="28" height="13" rx="6.500" fill="#f1f2f8" /><circle cx="21" cy="21.500" r="3.500" fill="#5260a0" />
      </svg>
      <time className="ml-[34px] whitespace-pre tabular-nums">sex. 10/10  11:53</time>
    </div>
  </header>
);

const TitleBar = () => (
  <div className="grid h-[52px] grid-cols-3 items-start">
    <div className="flex gap-4 pl-4 pt-3.5">
      <button type="button" aria-label="Close" className="size-6 rounded-full bg-[#ed6a5e]" />
      <button type="button" aria-label="Minimize" className="size-6 rounded-full bg-[#f4bf4f]" />
      <button type="button" aria-label="Zoom" className="size-6 rounded-full bg-[#61c554]" />
    </div>
    <h1 className="flex items-center justify-center whitespace-pre pt-1.5 font-['Noto_Sans',sans-serif] text-[27px] font-bold leading-10 text-[#a9acb3]">
      <svg className="mr-2.5" width="28" height="32" viewBox="0 0 28 32">
        <path d="M0 0h20l8 8v22H0z" fill="#4166a6" /><path d="M20 0l8 8h-8z" fill="#9db3d6" /><path d="M0 18h10l18 14H0z" fill="#f0bd4c" />
        <path d="M9 0v18M0 11h28" stroke="#fff" strokeWidth="2" /><circle cx="9" cy="11" r="2.500" fill="#4166a6" stroke="#fff" strokeWidth="1.500" />
      </svg>
      Autodesk AutoCAD 2026   Cónica.dwg
    </h1>
    <button type="button" className="flex h-[41px] w-[239px] items-center justify-self-end border-b-2 border-l-2 border-[#2a313c] bg-[#4e596c] pl-3 font-['Open_Sans',sans-serif] text-[23px] text-[#eeeff1]">
      <svg className="mr-2.5 shrink-0" width="24" height="28" viewBox="0 0 24 28" fill="none" stroke="#d8d9dc" strokeWidth="2.400">
        <circle cx="12" cy="7" r="5" /><path d="M1 27q0-11 11-11t11 11" />
      </svg>
      Carolina Gaspar
      <svg className="-ml-1.5 shrink-0" width="10" height="10" viewBox="0 0 10 10"><path d="M0 0h10L5 9z" fill="#d8d9dc" /></svg>
    </button>
  </div>
);

const FileTabs = () => (
  <div className="flex h-[49px] items-stretch border-y-2 border-[#262d38] bg-[#3c4453] font-['Inter',sans-serif] text-[23px]">
    <button type="button" aria-label="Home" className="flex w-[50px] items-center justify-center border-r-2 border-[#262d38]">
      <svg width="30" height="28" viewBox="0 0 30 28"><path d="M0 0h14v14H0z" fill="#97caf3" /><path d="M16 2h13v12H16zM2 16h12v12H2zM16 16h13v12H16z" fill={G} /></svg>
    </button>
    <button type="button" aria-label="New tab" className="flex w-[46px] items-center justify-center border-r-2 border-[#262d38]">
      <svg width="22" height="22" viewBox="0 0 22 22"><L d="M11 0v22M0 11h22" /></svg>
    </button>
    <button type="button" className="w-[260px] border-r-2 border-[#262d38] pl-2 text-left text-[#a0a4ab]">Start</button>
    <button type="button" className="w-[258px] border-r-2 border-[#262d38] bg-[#4e596f] pl-1.5 text-left font-medium text-white">Cónica</button>
  </div>
);

const Palette = () => (
  <aside className="flex w-[370px] shrink-0 flex-col border-r-2 border-[#212834]">
    <div className="flex h-[42px] text-2xl">
      <button type="button" className="w-[160px] text-[#f4f4f5]">Drafting</button>
      <button type="button" className="w-[162px] border-2 border-t-0 border-[#242b36] bg-[#2f333d] text-[#9b9ea4]">Modeling</button>
      <button type="button" className="flex-1 border-b-2 border-[#242b36] pb-1 text-[26px] leading-8 text-[#8f939b]">«</button>
    </div>
    {sections.map((s) => <PaletteSection key={s.title} section={s} />)}
    <div className="mb-2.5 mt-auto flex items-center gap-[34px] pl-[31px]">
      <button type="button" aria-label="Add section"><svg width="22" height="22" viewBox="0 0 22 22"><L d="M11 0v22M0 11h22" /></svg></button>
      <button type="button" aria-label="Palette menu">
        <svg width="28" height="22" viewBox="0 0 28 22"><path d="M6 1h21M6 7h21M6 20h21" stroke={G} strokeWidth="2" /><path d="M0 12h19v4H0zM21 15l3-4 3 4z" fill={G} /></svg>
      </button>
    </div>
  </aside>
);

const SideTabs = () => (
  <aside className="flex w-12 shrink-0 flex-col bg-[#2f3440] font-['Inter',sans-serif] text-[25px] text-[#dcdde0]">
    <button type="button" className="h-[45px] border-b-2 border-[#242b36] bg-[#3c4453] pb-1 text-[26px] leading-8 text-[#9a9ea6]">«</button>
    <button type="button" className="flex flex-1 items-center justify-center border-b-2 border-[#242b36]">
      <span className="rotate-180 whitespace-nowrap [writing-mode:vertical-rl]">Reference Manager</span>
    </button>
    <button type="button" className="flex flex-1 items-center justify-center">
      <span className="rotate-180 whitespace-nowrap [writing-mode:vertical-rl]">Blocks</span>
    </button>
    <span className="h-1.5 bg-[#212830]" />
  </aside>
);

const App: React.FC = () => (
  <div className="flex h-screen flex-col overflow-hidden bg-[radial-gradient(circle_at_20%_98%,#4a4f80,transparent_14%),radial-gradient(circle_at_45%_99%,#3a3f6b,transparent_18%),linear-gradient(90deg,#232c4a,#14222b_6%,#141c30_60%,#0d1a22)] font-['Liberation_Sans',sans-serif]">
    <MenuBar />
    <div className="flex min-h-0 flex-1 flex-col overflow-hidden rounded-[20px] border-t-2 border-[#a7aab8] bg-[#3c4350]">
      <TitleBar />
      <Toolbar />
      <FileTabs />
      <div className="flex min-h-0 flex-1">
        <Palette />
        <div className="flex min-w-0 flex-1 flex-col">
          <div className="flex min-h-0 flex-1">
            <main className="relative flex min-w-0 flex-1 flex-col bg-[#212830]">
              <Model3D />
              <ViewCube />
              <div className="relative flex items-center gap-[15px] pl-7 pt-1.5 font-['DejaVu_Sans',sans-serif] text-[23px] text-[#97999c]">
                <button type="button" className="mr-1">+</button>
                <button type="button" className="border-l-2 border-[#9fa1a4] pl-[11px] leading-7">Custom View</button>
                <button type="button" className="border-l-2 border-[#9fa1a4] pl-[11px] leading-7">X-Ray</button>
              </div>
              <button type="button" className="absolute right-28 top-[337px] flex h-6 w-[100px] items-center justify-between rounded-lg bg-[#6a737a] pl-2 pr-2.5 text-xl leading-6 text-[#20282f]">
                WCS
                <svg width="18" height="10" viewBox="0 0 18 10"><path d="M1 1h16L9 9z" fill="#9eabb2" stroke="#20282f" strokeWidth="1.500" /></svg>
              </button>
              <CommandPanel />
            </main>
            <SideTabs />
          </div>
          <StatusBar />
        </div>
      </div>
    </div>
    <Dock />
  </div>
);

export default App;
